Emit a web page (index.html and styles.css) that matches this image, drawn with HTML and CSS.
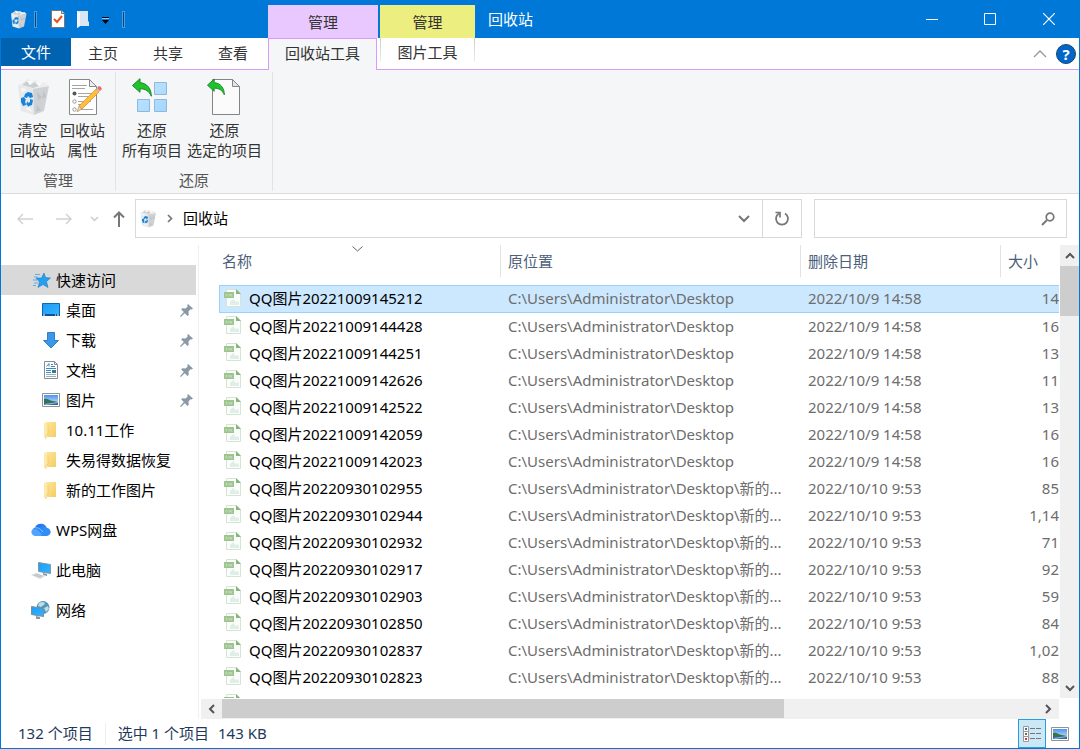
FILE: index.html
```html
<!DOCTYPE html>
<html lang="zh-CN">
<head>
<meta charset="utf-8">
<title>回收站</title>
<link rel="stylesheet" href="styles.css">
</head>
<body>
<svg class="defs" width="0" height="0" aria-hidden="true">
  <defs>
    <linearGradient id="sky" x1="0" y1="0" x2="0" y2="1"><stop offset="0" stop-color="#4d94ec"/><stop offset="1" stop-color="#d8ecfa"/></linearGradient>
    <linearGradient id="gold" x1="0" y1="0" x2="1" y2="1"><stop offset="0" stop-color="#ffe79c"/><stop offset="1" stop-color="#f4cc62"/></linearGradient>
    <linearGradient id="screen" x1="0" y1="0" x2="1" y2="1"><stop offset="0" stop-color="#1e9bf5"/><stop offset="1" stop-color="#35b5ff"/></linearGradient>
    <linearGradient id="pane" x1="0" y1="0" x2="1" y2="1"><stop offset="0" stop-color="#c4e6ff"/><stop offset="1" stop-color="#a2d6fd"/></linearGradient>
    <linearGradient id="cloud" x1="0" y1="0" x2="1" y2="1"><stop offset="0" stop-color="#0f63e6"/><stop offset="1" stop-color="#49a8ff"/></linearGradient>
    <symbol id="bin" viewBox="0 0 32 38">
      <path d="M1 7 16 10 17 37 4 33Z" fill="#e6e8ea"/>
      <path d="M16 10 32 8 27 33 17 37Z" fill="#cfd2d5"/>
      <path d="M1 7 7 4 10 1 15 3 19 2 23 5 28 4 32 8 16 11Z" fill="#eceded"/>
      <path d="M5 7 10 3 13 7 18 4 22 8 16 10Z" fill="#cccfd2"/>
      <path d="M10 3l3 4 3-4zM18 4l4 4 3-3z" fill="#fafafa"/>
      <path d="M20 14l5 5-4 4zM27 12l-2 9 4-2zM20 27l4 5-5 2z" fill="#bfc3c7"/>
      <path d="M4 10l6 1-5 4zM12 29l4 5-8-3z" fill="#f6f7f7"/>
      <path d="M8 16l3-2 4 1 1 4-3 1-2-2-1 2-3-1z" fill="#1683dc"/>
      <path d="M4 20l3-1 2 3-1 1 1 4-3 1-2-4z" fill="#1683dc"/>
      <path d="M13 21l3 1-1 5-3 1v1l-3-3 2-3v2l2-1z" fill="#1683dc"/>
    </symbol>
    <symbol id="png" viewBox="0 0 18 19">
      <path d="M2.500.5h10l4 4v13h-14z" fill="#fbfdfb" stroke="#d6e5d3"/>
      <path d="M12 0l5 5h-5z" fill="#86b57d"/>
      <path d="M6 16v-3l3-3 3 3 2-1 1 2v2z" fill="#dfeee8"/>
      <path d="M0 3h10v6H0z" fill="#9dc48f"/>
      <path d="M2 8V5h1v2M5 8V5l1.500 2V5M8.500 5.500h-1v2h1" fill="none" stroke="#c5dfbb" stroke-width=".7"/>
    </symbol>
    <symbol id="folder" viewBox="0 0 12 17">
      <path d="M2 0h10v15H3z" fill="url(#gold)"/><path d="M0 0l4 3v9l-2 1v4l-2-2z" fill="#ffe9a6"/><path d="M4 3v9l-2 1v4" fill="none" stroke="#edc65f" stroke-width=".7"/>
    </symbol>
    <symbol id="pin" viewBox="0 0 13 13">
      <path d="M8 0l5 4.500-1.500 1-1-.3-2 2.300.2 3.500-1.200 1L4.800 9.300.8 13 0 12.300 3.800 8 1.200 5.500l1-1.200 3.300.2L7.700 2.500 7.300 1z" fill="#8a99a5"/>
    </symbol>
    <symbol id="photo" viewBox="0 0 18 14">
      <path d="M.5.5h17v13H.5z" fill="#fff" stroke="#929292"/><path d="M2 2h14v10H2z" fill="url(#sky)"/><path d="M2 6c4-1 5 2 9 2l5 1v1H2z" fill="#397348"/><path d="M2 9h14v3H2z" fill="#31688d"/><path d="M2 11l14-2v1L4 12z" fill="#8bbbd0"/>
    </symbol>
    <symbol id="undo" viewBox="0 0 20 19"><path d="M.5 7.500 8 .7v4c7 .3 11.300 6 11.300 13.500C17 13 13.500 10.800 8 10.800v3.500z" fill="#20c32b" stroke="#16862e"/></symbol>
  </defs>
</svg>

<div class="window">
  <header class="top">
    <div class="top-left">
      <div class="quick">
        <svg class="q-bin" width="17" height="19"><use href="#bin"/></svg>
        <span class="q-sep"></span>
        <button class="plain q-check" aria-label="属性"><svg width="14" height="18" viewBox="0 0 14 18"><path d="M.5.5h10l3 3v14H.5z" fill="#fff" stroke="#777"/><path d="M10.500.5v3h3" fill="#ddd" stroke="#777"/><path d="M3 9l3 3 5-6" fill="none" stroke="#e5511a" stroke-width="2"/></svg></button>
        <button class="plain q-folder" aria-label="新建文件夹"><svg width="12" height="17" viewBox="0 0 12 17"><path d="M0 0h11v10l1 1v4H3l-3 2z" fill="#dce7f6"/><path d="M0 0l3 2v13l-3 2z" fill="#f3f7fd"/></svg></button>
        <button class="plain q-more" aria-label="自定义快速访问工具栏"><svg width="7" height="7" viewBox="0 0 7 7"><path d="M0 0h7v1H0zM0 3h7L3.500 7z" fill="#000"/><path d="M0 1h7v1H0z" fill="#fff" opacity=".6"/></svg></button>
        <span class="q-sep"></span>
      </div>
      <nav class="tabs">
        <button class="tab tab-file">文件</button>
        <button class="tab tab-home">主页</button>
        <button class="tab tab-share">共享</button>
        <button class="tab tab-view">查看</button>
      </nav>
    </div>
    <div class="context context-bin">
      <div class="context-head"><span>管理</span></div>
      <div class="context-foot"><button class="tab tab-active">回收站工具</button></div>
    </div>
    <div class="context context-pic">
      <div class="context-head"><span>管理</span></div>
      <div class="context-foot"><button class="tab tab-pic">图片工具</button></div>
    </div>
    <div class="top-right">
      <div class="caption">
        <h1>回收站</h1>
        <button class="plain win" aria-label="最小化"><svg width="12" height="12"><path d="M0 6.500h12" stroke="#fff"/></svg></button>
        <button class="plain win" aria-label="最大化"><svg width="12" height="12"><path d="M.5.5h11v11H.5z" fill="none" stroke="#fff"/></svg></button>
        <button class="plain win" aria-label="关闭"><svg width="12" height="12"><path d="M0 0l12 12M12 0L0 12" stroke="#fff" stroke-width="1.200"/></svg></button>
      </div>
      <div class="help-row">
        <button class="plain" aria-label="折叠功能区"><svg width="14" height="8" viewBox="0 0 14 8"><path d="M1 7l6-6 6 6" fill="none" stroke="#999" stroke-width="1.300"/></svg></button>
        <button class="help" aria-label="帮助">?</button>
      </div>
    </div>
  </header>

  <section class="ribbon">
    <div class="group group-manage">
      <div class="tools">
        <button class="tool"><svg width="32" height="38"><use href="#bin"/></svg><span>清空<br>回收站</span></button>
        <button class="tool"><svg width="38" height="38" viewBox="-4 0 38 38"><path d="M1.500 1.500h20l7 7v28h-27z" fill="#fff" stroke="#888"/><path d="M21.500 1.500v7h7z" fill="#eee" stroke="#888"/><path d="M4 7.500h15M4 10.500h13M10 15.500h15M10 18.500h10M10 23.500h13M10 26.500h9M10 31.500h15" stroke="#a5a5a5"/><circle cx="6.500" cy="15.500" r="2" fill="#555"/><circle cx="6.500" cy="23.500" r="1.700" fill="#fff" stroke="#999"/><circle cx="6.500" cy="31.500" r="1.700" fill="#fff" stroke="#999"/><path d="M11 28 28 11l3 3L14 31z" fill="#ffbe3b" stroke="#d88b22" stroke-width=".7"/><path d="M9 34l2-6 3 3z" fill="#f1d3a2" stroke="#9b7d54" stroke-width=".5"/><path d="M28 11l1-1 3 3-1 1z" fill="#bcc2c6"/><path d="M29 10l2-2q2 0 3 3l-2 2z" fill="#e96d73"/></svg><span>回收站<br>属性</span></button>
      </div>
      <div class="group-name">管理</div>
    </div>
    <div class="group group-restore">
      <div class="tools">
        <button class="tool"><svg width="44" height="38" viewBox="0 0 44 38"><g fill="url(#pane)" stroke="#8eb9dd"><path d="M24.500 4.500h12v12h-12zM7.500 21.500h12v12h-12zM24.500 21.500h12v12h-12z"/></g><use href="#undo" x="2" y="0" width="20" height="19"/></svg><span>还原<br>所有项目</span></button>
        <button class="tool"><svg width="44" height="38" viewBox="0 0 44 38"><path d="M9.500 1.500h20l7 7v28h-27z" fill="#fbfbfb" stroke="#858585"/><path d="M29.500 1.500v7h7z" fill="#e4e4e4" stroke="#858585"/><use href="#undo" x="4" y="0" width="18" height="18"/></svg><span>还原<br>选定的项目</span></button>
      </div>
      <div class="group-name">还原</div>
    </div>
  </section>

  <section class="address-row">
    <div class="history">
      <button class="plain" aria-label="后退"><svg width="16" height="12" viewBox="0 0 16 12"><path d="M16 6H1M6 1L1 6l5 5" fill="none" stroke="#d2d2d2" stroke-width="1.500"/></svg></button>
      <button class="plain" aria-label="前进"><svg width="16" height="12" viewBox="0 0 16 12"><path d="M0 6h15M10 1l5 5-5 5" fill="none" stroke="#d2d2d2" stroke-width="1.500"/></svg></button>
      <button class="plain" aria-label="最近位置"><svg width="9" height="6" viewBox="0 0 9 6"><path d="M1 1l3.500 3.500L8 1" fill="none" stroke="#ccc" stroke-width="1.500"/></svg></button>
      <button class="plain" aria-label="向上"><svg width="12" height="16" viewBox="0 0 12 16"><path d="M6 16V1M1 6.500L6 1.500l5 5" fill="none" stroke="#777" stroke-width="2"/></svg></button>
    </div>
    <div class="address">
      <svg width="16" height="19"><use href="#bin"/></svg>
      <svg class="crumb-arrow" width="6" height="9" viewBox="0 0 6 9"><path d="M1 1l3.500 3.500L1 8" fill="none" stroke="#777" stroke-width="1.700"/></svg>
      <span class="crumb">回收站</span>
      <button class="plain addr-drop" aria-label="历史记录"><svg width="12" height="8" viewBox="0 0 12 8"><path d="M1 1l5 5 5-5" fill="none" stroke="#777" stroke-width="2"/></svg></button>
      <button class="plain refresh" aria-label="刷新"><svg width="16" height="16" viewBox="0 0 16 16"><path d="M11 2.500A6 6 0 1 1 5 2.500" fill="none" stroke="#777" stroke-width="1.800"/><path d="M1.500 1.500H6v5" fill="none" stroke="#777" stroke-width="1.700"/></svg></button>
    </div>
    <div class="search">
      <input type="text" aria-label="搜索回收站">
      <svg width="14" height="14" viewBox="0 0 14 14"><circle cx="9" cy="5" r="3.800" fill="none" stroke="#777" stroke-width="1.700"/><path d="M6 8L1 13" stroke="#777" stroke-width="2"/></svg>
    </div>
  </section>

  <main class="content">
    <nav class="side">
      <a class="node node-current" href="#"><svg width="18" height="17" viewBox="0 0 18 17"><path d="M11 1l1.500 4.500L17.500 6l-4 3.500 1.500 6-5-3-5 3 1.500-5.500L3 6h5.500z" fill="#26a0ee" stroke="#1a7dc4" stroke-width=".6"/><path d="M2 2.500h5M1 5h4M0 8h4M1 11h4M0 13.500h3" stroke="#65abdd"/></svg>快速访问</a>
      <a class="node child" href="#"><svg width="18" height="14" viewBox="0 0 18 14"><path d="M.5.5h17v12H.5z" fill="url(#screen)" stroke="#0769b4"/><path d="M0 11h18v2H0z" fill="#07569b"/><path d="M1 12h2M13 12h1M15 12h2" stroke="#fff"/></svg><span>桌面</span><svg class="pin" width="13" height="13"><use href="#pin"/></svg></a>
      <a class="node child" href="#"><svg width="18" height="17" viewBox="0 0 18 17"><path d="M5.500.5h7v8h4L9 16 1.500 8.500h4z" fill="#3b97e8" stroke="#2d7fca"/></svg><span>下载</span><svg class="pin" width="13" height="13"><use href="#pin"/></svg></a>
      <a class="node child" href="#"><svg width="18" height="18" viewBox="0 0 18 18"><path d="M2.500.5h10l3 3v14h-13z" fill="#fff" stroke="#8a8a8a"/><path d="M12.500.5v3h3" fill="none" stroke="#8a8a8a"/><path d="M4.500 5.500l2.500-3v3M9 3.500h2M9 5.500h4M4 7.500h10M4 9.500h5M4 11.500h5" fill="none" stroke="#368cc5"/><path d="M10 9h4v3h-4z" fill="#3b7890"/><path d="M4 13.500h10M4 15.500h10" stroke="#9eaeb8"/></svg><span>文档</span><svg class="pin" width="13" height="13"><use href="#pin"/></svg></a>
      <a class="node child" href="#"><svg width="18" height="14"><use href="#photo"/></svg><span>图片</span><svg class="pin" width="13" height="13"><use href="#pin"/></svg></a>
      <a class="node child" href="#"><svg class="folder" width="18" height="17" viewBox="1 0 18 17"><use href="#folder" x="3" y="0" width="12" height="17"/></svg><span>10.11工作</span></a>
      <a class="node child" href="#"><svg class="folder" width="18" height="17" viewBox="1 0 18 17"><use href="#folder" x="3" y="0" width="12" height="17"/></svg><span>失易得数据恢复</span></a>
      <a class="node child" href="#"><svg class="folder" width="18" height="17" viewBox="1 0 18 17"><use href="#folder" x="3" y="0" width="12" height="17"/></svg><span>新的工作图片</span></a>
      <a class="node root" href="#"><svg width="20" height="14" viewBox="0 0 20 14"><path d="M5 13a4.500 4.500 0 0 1-1-8.500A6.500 6.500 0 0 1 16 5l-8 8z" fill="url(#cloud)"/><path d="M7 13l6-7a4 4 0 1 1 3 7z" fill="#318ef7"/><path d="M1 7c4-3 7 0 10 5l-2 1H5a4 4 0 0 1-4-6z" fill="#4ea5ff"/><path d="M4 5c4-1 6 2 8 4" fill="none" stroke="#bcdcff" stroke-width=".7"/></svg>WPS网盘</a>
      <a class="node root" href="#"><svg width="20" height="17" viewBox="0 0 20 17"><path d="M7.500.5l12 2v9l-12-2z" fill="url(#screen)" stroke="#8097a5"/><path d="M12 11l4 1v2l-4-1z" fill="#8b9aa4"/><path d="M0 13l5-2 9 3-5 3z" fill="#d5dadd"/><path d="M3 13l7 2M5 12l6 2" stroke="#a8b0b5" stroke-width=".6"/></svg>此电脑</a>
      <a class="node root" href="#"><svg width="20" height="18" viewBox="0 0 20 18"><circle cx="12" cy="6.500" r="6.500" fill="#5694b7"/><path d="M8 2c3-2 6-1 6 1l-4 3-3-1zM13 7l4-2 1 3-3 3z" fill="#b8e0ea"/><path d="M.5 5.500l12 2v8l-12-2z" fill="url(#screen)" stroke="#7790a0"/><path d="M5 15l4 1v2H5z" fill="#8d989e"/></svg>网络</a>
    </nav>

    <section class="files">
      <div class="list-wrap">
        <div class="list">
          <svg class="sort" width="11" height="6" viewBox="0 0 11 6"><path d="M.5.5l5 4.500 5-4.500" fill="none" stroke="#666"/></svg>
          <table>
            <colgroup><col class="c-name"><col class="c-path"><col class="c-date"><col></colgroup>
            <thead><tr><th><div>名称</div></th><th><div>原位置</div></th><th><div>删除日期</div></th><th><div>大小</div></th></tr></thead>
            <tbody>
              <tr class="selected"><td><svg width="18" height="19"><use href="#png"/></svg>QQ图片20221009145212</td><td>C:\Users\Administrator\Desktop</td><td>2022/10/9 14:58</td><td>14</td></tr>
              <tr><td><svg width="18" height="19"><use href="#png"/></svg>QQ图片20221009144428</td><td>C:\Users\Administrator\Desktop</td><td>2022/10/9 14:58</td><td>16</td></tr>
              <tr><td><svg width="18" height="19"><use href="#png"/></svg>QQ图片20221009144251</td><td>C:\Users\Administrator\Desktop</td><td>2022/10/9 14:58</td><td>13</td></tr>
              <tr><td><svg width="18" height="19"><use href="#png"/></svg>QQ图片20221009142626</td><td>C:\Users\Administrator\Desktop</td><td>2022/10/9 14:58</td><td>11</td></tr>
              <tr><td><svg width="18" height="19"><use href="#png"/></svg>QQ图片20221009142522</td><td>C:\Users\Administrator\Desktop</td><td>2022/10/9 14:58</td><td>13</td></tr>
              <tr><td><svg width="18" height="19"><use href="#png"/></svg>QQ图片20221009142059</td><td>C:\Users\Administrator\Desktop</td><td>2022/10/9 14:58</td><td>16</td></tr>
              <tr><td><svg width="18" height="19"><use href="#png"/></svg>QQ图片20221009142023</td><td>C:\Users\Administrator\Desktop</td><td>2022/10/9 14:58</td><td>16</td></tr>
              <tr><td><svg width="18" height="19"><use href="#png"/></svg>QQ图片20220930102955</td><td>C:\Users\Administrator\Desktop\新的...</td><td>2022/10/10 9:53</td><td>85</td></tr>
              <tr><td><svg width="18" height="19"><use href="#png"/></svg>QQ图片20220930102944</td><td>C:\Users\Administrator\Desktop\新的...</td><td>2022/10/10 9:53</td><td>1,14</td></tr>
              <tr><td><svg width="18" height="19"><use href="#png"/></svg>QQ图片20220930102932</td><td>C:\Users\Administrator\Desktop\新的...</td><td>2022/10/10 9:53</td><td>71</td></tr>
              <tr><td><svg width="18" height="19"><use href="#png"/></svg>QQ图片20220930102917</td><td>C:\Users\Administrator\Desktop\新的...</td><td>2022/10/10 9:53</td><td>92</td></tr>
              <tr><td><svg width="18" height="19"><use href="#png"/></svg>QQ图片20220930102903</td><td>C:\Users\Administrator\Desktop\新的...</td><td>2022/10/10 9:53</td><td>59</td></tr>
              <tr><td><svg width="18" height="19"><use href="#png"/></svg>QQ图片20220930102850</td><td>C:\Users\Administrator\Desktop\新的...</td><td>2022/10/10 9:53</td><td>84</td></tr>
              <tr><td><svg width="18" height="19"><use href="#png"/></svg>QQ图片20220930102837</td><td>C:\Users\Administrator\Desktop\新的...</td><td>2022/10/10 9:53</td><td>1,02</td></tr>
              <tr><td><svg width="18" height="19"><use href="#png"/></svg>QQ图片20220930102823</td><td>C:\Users\Administrator\Desktop\新的...</td><td>2022/10/10 9:53</td><td>88</td></tr>
              <tr><td><svg width="18" height="19"><use href="#png"/></svg></td><td></td><td></td><td></td></tr>
            </tbody>
          </table>
        </div>
        <div class="vbar">
          <button class="plain bar-btn" aria-label="向上滚动"><svg width="10" height="7" viewBox="0 0 10 7"><path d="M1 6l4-4 4 4" fill="none" stroke="#555" stroke-width="2"/></svg></button>
          <div class="v-track"><div class="v-thumb"></div></div>
          <button class="plain bar-btn" aria-label="向下滚动"><svg width="10" height="7" viewBox="0 0 10 7"><path d="M1 1l4 4 4-4" fill="none" stroke="#555" stroke-width="2"/></svg></button>
        </div>
      </div>
      <div class="hbar">
        <button class="plain bar-btn" aria-label="向左滚动"><svg width="7" height="10" viewBox="0 0 7 10"><path d="M6 1L2 5l4 4" fill="none" stroke="#555" stroke-width="2"/></svg></button>
        <div class="h-track"><div class="h-thumb"></div></div>
        <button class="plain bar-btn" aria-label="向右滚动"><svg width="7" height="10" viewBox="0 0 7 10"><path d="M1 1l4 4-4 4" fill="none" stroke="#555" stroke-width="2"/></svg></button>
      </div>
    </section>
  </main>

  <footer class="status">
    <span class="count">132 个项目</span>
    <span class="chosen"><span>选中 1 个项目</span><span>143 KB</span></span>
    <button class="plain view view-on" aria-label="详细信息"><svg width="18" height="16" viewBox="0 0 18 16"><path d="M.5.500h5v15h-5zM.5 5.500h5M.5 10.500h5" fill="#fff" stroke="#999"/><path d="M2 2h2v2H2z" fill="#36789d"/><path d="M2 7h2v2H2z" fill="#7b6b4a"/><path d="M2 12h2v2H2z" fill="#d33"/><path d="M7 2.500h5M13 2.500h5M7 7.500h5M13 7.500h5M7 12.500h5M13 12.500h5" stroke="#777"/></svg></button>
    <button class="plain view" aria-label="大图标"><svg width="18" height="14"><use href="#photo"/></svg></button>
  </footer>
</div>
</body>
</html>
```

FILE: styles.css
```css
* { box-sizing: border-box; }
body {
  margin: 0;
  font: 15px/20px "Noto Sans", "Noto Sans CJK SC", sans-serif;
  color: #000;
  background: #fff;
}
button, input { font: inherit; color: inherit; }
svg { display: block; flex: none; }
.defs { position: absolute; }
.plain {
  display: flex;
  align-items: center;
  justify-content: center;
  padding: 0;
  border: 0;
  background: none;
}
.window {
  display: flex;
  flex-direction: column;
  height: 100vh;
  border: 1px solid #0078d7;
  border-top: 0;
}

/* title bar and tabs */
.top { display: flex; flex: none; height: 70px; }
.top-left { width: 267px; }
.quick {
  display: flex;
  align-items: center;
  height: 38px;
  padding-left: 9px;
  background: #0078d7;
}
.q-sep { width: 3px; height: 17px; margin-left: 7px; border: 1px solid #4c9de0; background: #06457c; }
.q-check { margin-left: 14px; }
.q-folder { margin-left: 12px; }
.q-more { margin: 3px 5px 0 13px; }
.q-more + .q-sep { margin-left: 8px; }
.tabs {
  display: flex;
  height: 32px;
  border-bottom: 1px solid #d99bf7;
  background: #fff;
}
.tab { height: 31px; padding: 0 0 2px; border: 0; background: none; color: #333; white-space: nowrap; }
.tab-file { width: 70px; height: 28px; padding-bottom: 0; background: #0063b1; color: #fff; }
.tab-home { width: 64px; }
.tab-share { width: 66px; }
.tab-view { width: 64px; }
.context-head { height: 38px; padding-top: 5px; background: #0078d7; }
.context-head span { display: block; height: 33px; line-height: 34px; text-align: center; color: #333; }
.context-foot { display: flex; height: 32px; border-bottom: 1px solid #d99bf7; }
.context-bin { width: 110px; }
.context-bin span { background: #e8c8ff; }
.context-bin .context-foot { border: 0; background: linear-gradient(#fff 31px, #d99bf7 31px); }
.context-pic { width: 97px; }
.context-pic span { margin-left: 2px; background: #edee80; }
.tab-active { width: 109px; height: 32px; padding-bottom: 4px; border: 1px solid #d99bf7; border-bottom: 0; background: #f5f6f7; }
.tab-pic {
  width: 95px;
  height: 24px;
  margin-left: 2px;
  padding: 4px 0 0;
  border: 1px solid;
  border-width: 0 1px;
  border-image: linear-gradient(#ccc, #eee) 1;
}
.top-right { flex: 1; }
.caption { display: flex; height: 38px; padding-left: 13px; background: #0078d7; color: #fff; }
.caption h1 { flex: 1; margin: 0; font-size: 15px; font-weight: 400; line-height: 38px; }
.win { width: 58px; }
.win:last-child { width: 60px; }
.help-row {
  display: flex;
  align-items: center;
  justify-content: flex-end;
  gap: 9px;
  height: 32px;
  padding-right: 3px;
  border-bottom: 1px solid #d99bf7;
}
.help {
  width: 20px;
  height: 20px;
  padding: 0;
  border: 1px solid #1b456d;
  border-radius: 50%;
  background: #0067c8;
  color: #fff;
  font-weight: 700;
  line-height: 18px;
}

/* ribbon */
.ribbon { display: flex; flex: none; height: 124px; padding-top: 2px; border-bottom: 1px solid #dadbdc; background: #f5f6f7; }
.group { display: flex; flex-direction: column; height: 119px; border-right: 1px solid #e2e3e4; }
.tools { display: flex; gap: 5px; height: 98px; padding: 6px 10px 0 9px; }
.group-restore .tools { padding-left: 6px; }
.tool {
  display: flex;
  flex-direction: column;
  align-items: center;
  gap: 4px;
  padding: 0;
  border: 0;
  background: none;
  color: #333;
  white-space: nowrap;
}
.group-name { text-align: center; color: #555; }

/* address row */
.address-row { display: flex; flex: none; height: 51px; padding: 5px 12px 7px 16px; }
.history { display: flex; align-items: center; gap: 14px; width: 118px; }
.history button:nth-child(2) { margin: 0 4px 0 9px; }
.address { display: flex; flex: 1; align-items: center; border: 1px solid #d9d9d9; padding-left: 4px; }
.crumb-arrow { margin: 0 10px 0 11px; }
.crumb { flex: 1; padding-bottom: 2px; }
.addr-drop { width: 37px; align-self: stretch; }
.refresh { width: 39px; align-self: stretch; border-left: 1px solid #d9d9d9; }
.search { display: flex; align-items: center; width: 253px; margin-left: 12px; padding-right: 11px; border: 1px solid #d9d9d9; }
.search input { flex: 1; min-width: 0; height: 34px; border: 0; outline: 0; }

/* body */
.content { display: flex; flex: 1; min-height: 0; }
.side { width: 198px; padding-top: 20px; border-right: 1px solid #f0f0f0; }
.node {
  display: flex;
  align-items: center;
  gap: 5px;
  height: 30px;
  margin-right: 2px;
  padding-left: 32px;
  color: #000;
  text-decoration: none;
}
.node-current { background: #d9d9d9; }
.child { gap: 6px; padding-left: 41px; }
.root { margin-top: 10px; padding-left: 30px; }
.child span { flex: 1; }
.pin { margin-right: 3px; }
.files { display: flex; flex: 1; flex-direction: column; min-width: 0; padding-left: 2px; }
.list-wrap { display: flex; flex: 1; min-height: 0; }
.list { position: relative; flex: 1; min-width: 0; padding: 0 1px 0 18px; overflow: hidden; }
.sort { position: absolute; left: 151px; top: 1px; }
table { width: 100%; table-layout: fixed; border-collapse: separate; border-spacing: 0; }
.c-name { width: 282px; }
.c-path { width: 300px; }
.c-date { width: 200px; }
th { height: 40px; padding: 0; vertical-align: top; font-weight: 400; text-align: left; color: #4c607a; }
th div { height: 32px; padding-left: 7px; border-right: 1px solid #e2e2e2; line-height: 33px; }
th:first-child div { padding-left: 3px; }
th:last-child div { border: 0; }
td { height: 27px; padding: 0 0 2px 7px; color: #6d6d6d; white-space: nowrap; line-height: 24px; }
td:first-child { display: flex; align-items: center; gap: 7px; padding-left: 5px; color: #000; }
td:last-child { text-align: right; }
.selected td { height: 28px; border: 1px solid #99d1ff; border-width: 1px 0; background: #cce8ff; }
.selected td:first-child { border-left-width: 1px; padding-left: 4px; }
.vbar { display: flex; flex-direction: column; width: 19px; background: #f0f0f0; }
.bar-btn { width: 20px; height: 20px; }
.vbar .bar-btn { width: 19px; }
.v-track { flex: 1; }
.v-thumb { height: 12%; margin-top: 1px; background: #cdcdcd; }
.hbar { display: flex; flex: none; height: 20px; margin: 1px 20px 0 0; background: #f0f0f0; }
.hbar .bar-btn:last-child { width: 22px; }
.h-track { flex: 1; padding-left: 1px; }
.h-thumb { width: 69%; height: 19px; background: #cdcdcd; }

/* status bar */
.status { display: flex; flex: none; align-items: center; height: 29px; padding: 0 5px 0 17px; color: #1e395b; }
.count { padding: 0 12px 2px 0; border-right: 1px solid #eee; }
.chosen { display: flex; flex: 1; gap: 9px; padding: 0 0 2px 12px; }
.view { width: 28px; height: 29px; }
.view-on { border: 1px solid #26a0da; background: #cce8f6; }
```
